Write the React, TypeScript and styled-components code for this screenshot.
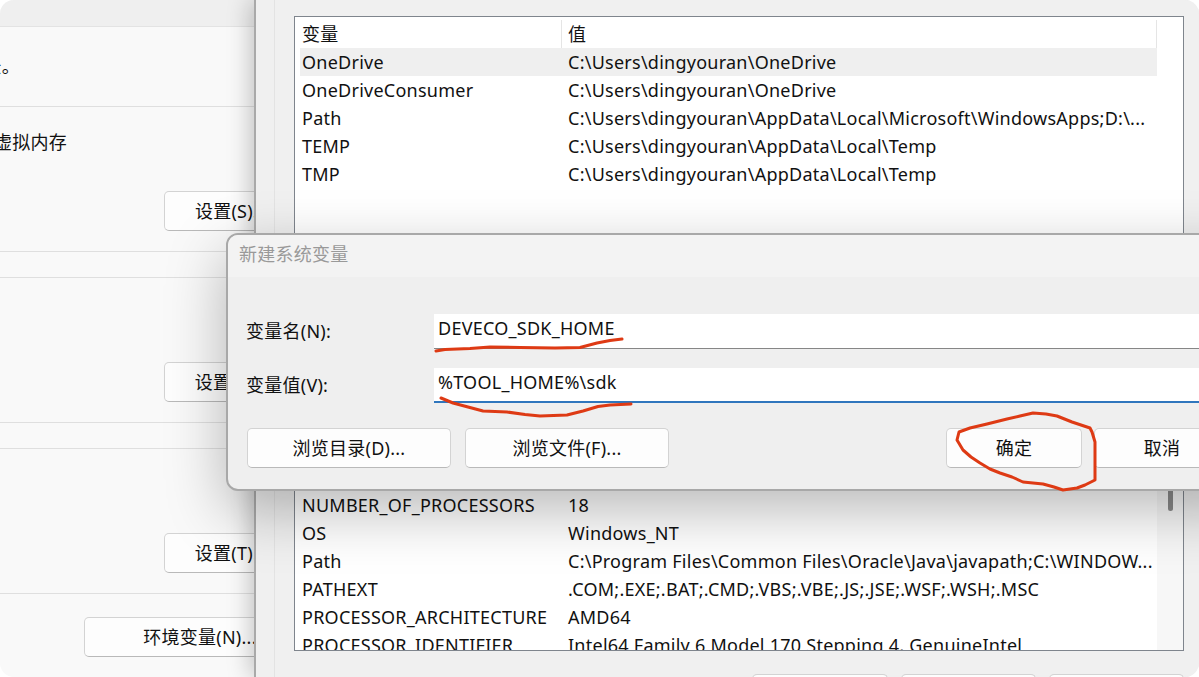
import styled, { createGlobalStyle } from "styled-components";

const GlobalStyle = createGlobalStyle`
  html, body {
    margin: 0;
    background: #fff;
  }
  * {
    box-sizing: border-box;
  }
`;

const Screen = styled.div`
  position: relative;
  display: flex;
  width: 1199px;
  height: 677px;
  overflow: hidden;
  border-radius: 14px;
  color: #111;
  font: 18px/28px "Noto Sans", "Noto Sans CJK SC", sans-serif;
  letter-spacing: 0.25px;
  white-space: nowrap;
`;

const SystemWindow = styled.section`
  flex: none;
  width: 800px;
  margin: 0 -64px 0 -482px;
  background: #f9f9f9;
`;

const TitleBar = styled.div`
  height: 27px;
  background: #efefef;
  border-bottom: 1px solid #e3e3e3;
`;

const Group = styled.div<{ $height: number; $spaced?: boolean }>`
  display: flex;
  flex-direction: column;
  height: ${(p) => p.$height}px;
  margin-top: ${(p) => (p.$spaced ? 25 : 0)}px;
  padding: 0 19px 20px 0;
  border-top: ${(p) => (p.$spaced ? "1px solid #dfdfdf" : "none")};
  border-bottom: 1px solid #dfdfdf;
`;

const GroupText = styled.p<{ $top: number; $end: number }>`
  flex: 1;
  margin: ${(p) => p.$top}px ${(p) => p.$end}px 0 0;
  text-align: right;
`;

const PlainButton = styled.button<{ $width: number }>`
  flex: none;
  width: ${(p) => p.$width}px;
  height: 40px;
  padding: 0;
  background: #fdfdfd;
  border: 1px solid #d3d3d3;
  border-bottom-color: #b9b9b9;
  border-radius: 5px;
  color: #111;
  font: inherit;
  letter-spacing: inherit;
`;

const GroupButton = styled(PlainButton)`
  margin-top: auto;
  align-self: flex-end;
`;

const Footer = styled.div`
  display: flex;
  justify-content: flex-end;
  padding: 23px 2px 0 0;
`;

const EnvWindow = styled.section`
  position: relative;
  z-index: 1;
  flex: 1;
  min-width: 0;
  padding: 0 15px 0 18px;
  background: #f0f0f0;
  border-left: 2px solid #a9a9a9;
  box-shadow: -4px 0 22px rgba(0, 0, 0, 0.22);
`;

const EnvBody = styled.div`
  display: flex;
  flex-direction: column;
  height: 677px;
  padding: 16px 0 0 19px;
  border-left: 1px solid #e3e3e3;
`;

const VarList = styled.div<{ $height: number; $gap?: number }>`
  position: relative;
  flex: none;
  height: ${(p) => p.$height}px;
  margin-top: ${(p) => p.$gap ?? 0}px;
  padding: 3px 26px 0 5px;
  overflow: hidden;
  background: #fff;
  border: 1px solid #7f858d;
`;

const Row = styled.div<{ $active?: boolean; $head?: boolean }>`
  display: flex;
  height: 28px;
  background: ${(p) => (p.$active ? "#efefef" : "transparent")};
  border-right: ${(p) => (p.$head ? "1px solid #e5e5e5" : "none")};
`;

const NameCell = styled.div<{ $head?: boolean }>`
  flex: none;
  width: 262px;
  padding-left: 2px;
  border-right: ${(p) => (p.$head ? "1px solid #e5e5e5" : "none")};
`;

const ValueCell = styled.div`
  flex: 1;
  min-width: 0;
  padding-left: 6px;
`;

const ScrollTrack = styled.div`
  position: absolute;
  top: 0;
  right: 0;
  bottom: 0;
  width: 26px;
  background: #f7f7f7;
`;

const ScrollThumb = styled.div`
  width: 5px;
  height: 107px;
  margin-left: 11px;
  background: #8a8a8a;
  border-radius: 3px;
`;

const EnvActions = styled.div`
  display: flex;
  justify-content: flex-end;
  gap: 13px;
  margin-top: 23px;
`;

const Dialog = styled.div`
  position: absolute;
  z-index: 2;
  top: 233px;
  left: 226px;
  width: 1030px;
  height: 258px;
  background: #efefef;
  border: 2px solid #a8a8a8;
  border-radius: 12px;
  box-shadow: 0 20px 60px rgba(0, 0, 0, 0.28);
`;

const DialogTitle = styled.div`
  height: 42px;
  padding: 5px 0 0 11px;
  background: #f3f3f3;
  border-radius: 10px 10px 0 0;
  color: #999;
`;

const DialogBody = styled.div`
  display: flex;
  flex-direction: column;
  padding: 37px 0 0 18px;
`;

const Field = styled.label`
  display: flex;
  align-items: center;
  height: 35px;
  margin-bottom: 19px;
`;

const FieldLabel = styled.span`
  flex: none;
  width: 188px;
  padding-bottom: 2px;
`;

const FieldValue = styled.div<{ $focused?: boolean }>`
  flex: 1;
  height: 35px;
  padding-left: 4px;
  background: #fff;
  border-bottom: ${(p) => (p.$focused ? "2px solid #2f76bd" : "1px solid #868686")};
  line-height: 28px;
`;

const DialogActions = styled.div`
  display: flex;
  margin: 6px 0 0 1px;
  gap: 14px;
`;

const ConfirmGroup = styled.div`
  display: flex;
  gap: 12px;
  margin-left: 263px;
`;

const Scribble = styled.svg`
  position: absolute;
  z-index: 3;
  top: 0;
  left: 0;
  pointer-events: none;
`;

type Variable = { name: string; value: string };

const userVars: Variable[] = [
  { name: "OneDrive", value: "C:\\Users\\dingyouran\\OneDrive" },
  { name: "OneDriveConsumer", value: "C:\\Users\\dingyouran\\OneDrive" },
  { name: "Path", value: "C:\\Users\\dingyouran\\AppData\\Local\\Microsoft\\WindowsApps;D:\\..." },
  { name: "TEMP", value: "C:\\Users\\dingyouran\\AppData\\Local\\Temp" },
  { name: "TMP", value: "C:\\Users\\dingyouran\\AppData\\Local\\Temp" },
];

const systemVars: Variable[] = [
  { name: "ComSpec", value: "C:\\WINDOWS\\system32\\cmd.exe" },
  { name: "DriverData", value: "C:\\Windows\\System32\\Drivers\\DriverData" },
  { name: "NUMBER_OF_PROCESSORS", value: "18" },
  { name: "OS", value: "Windows_NT" },
  { name: "Path", value: "C:\\Program Files\\Common Files\\Oracle\\Java\\javapath;C:\\WINDOW..." },
  { name: "PATHEXT", value: ".COM;.EXE;.BAT;.CMD;.VBS;.VBE;.JS;.JSE;.WSF;.WSH;.MSC" },
  { name: "PROCESSOR_ARCHITECTURE", value: "AMD64" },
  { name: "PROCESSOR_IDENTIFIER", value: "Intel64 Family 6 Model 170 Stepping 4, GenuineIntel" },
];

function Rows({ items, activeFirst }: { items: Variable[]; activeFirst?: boolean }) {
  return (
    <>
      <Row $head>
        <NameCell $head>变量</NameCell>
        <ValueCell>值</ValueCell>
      </Row>
      {items.map((item, i) => (
        <Row key={item.name} $active={activeFirst && i === 0}>
          <NameCell>{item.name}</NameCell>
          <ValueCell>{item.value}</ValueCell>
        </Row>
      ))}
    </>
  );
}

export default function App() {
  return (
    <Screen>
      <GlobalStyle />
      <SystemWindow>
        <TitleBar />
        <Group $height={80}>
          <GroupText $top={25} $end={279}>要进行大多数更改，你必须作为管理员登录。</GroupText>
        </Group>
        <Group $height={145}>
          <GroupText $top={21} $end={232}>视觉效果，处理器计划，内存使用，以及虚拟内存</GroupText>
          <GroupButton $width={135}>设置(S)...</GroupButton>
        </Group>
        <Group $height={146} $spaced>
          <GroupButton $width={135}>设置(E)...</GroupButton>
        </Group>
        <Group $height={146} $spaced>
          <GroupButton $width={135}>设置(T)...</GroupButton>
        </Group>
        <Footer>
          <PlainButton $width={232}>环境变量(N)...</PlainButton>
        </Footer>
      </SystemWindow>

      <EnvWindow>
        <EnvBody>
          <VarList $height={300}>
            <Rows items={userVars} activeFirst />
          </VarList>
          <VarList $height={248} $gap={87}>
            <Rows items={systemVars} />
            <ScrollTrack>
              <ScrollThumb />
            </ScrollTrack>
          </VarList>
          <EnvActions>
            <PlainButton $width={136}>新建(W)...</PlainButton>
            <PlainButton $width={135}>编辑(I)...</PlainButton>
            <PlainButton $width={135}>删除(L)</PlainButton>
          </EnvActions>
        </EnvBody>
      </EnvWindow>

      <Dialog>
        <DialogTitle>新建系统变量</DialogTitle>
        <DialogBody>
          <Field>
            <FieldLabel>变量名(N):</FieldLabel>
            <FieldValue>DEVECO_SDK_HOME</FieldValue>
          </Field>
          <Field>
            <FieldLabel>变量值(V):</FieldLabel>
            <FieldValue $focused>%TOOL_HOME%\sdk</FieldValue>
          </Field>
          <DialogActions>
            <PlainButton $width={204}>浏览目录(D)...</PlainButton>
            <PlainButton $width={204}>浏览文件(F)...</PlainButton>
            <ConfirmGroup>
              <PlainButton $width={136}>确定</PlainButton>
              <PlainButton $width={136}>取消</PlainButton>
            </ConfirmGroup>
          </DialogActions>
        </DialogBody>
      </Dialog>

      <Scribble width="1199" height="677" viewBox="0 0 1199 677" fill="none" stroke="#de3a14" strokeWidth="3" strokeLinecap="round" strokeLinejoin="round">
        <path d="M436 351 L445 349.5 L470 348.5 L490 347 L520 347.5 L555 348 L580 347.5 L597 343 L610 340.5 L622 339" />
        <path d="M441 398 L453 403 L468 407 L483 411 L507 412 L525 414.5 L540 416 L567 415 L583 411 L598 406.5 L610 405 L631 404" />
        <path d="M970 428 L959 432 L957 440 L963 450 L971 457 L980 463 L990 469 L1000 473 L1012 477 L1023 482 L1043 484 L1054 487 L1063 490 L1077 488 L1085 485 L1095 480 L1095 442 L1092 432 L1090 428 L1072 422 L1057 416 L1046 414 L1033 413 L1020 416 L1007 419 L987 424 Z" />
      </Scribble>
    </Screen>
  );
}
